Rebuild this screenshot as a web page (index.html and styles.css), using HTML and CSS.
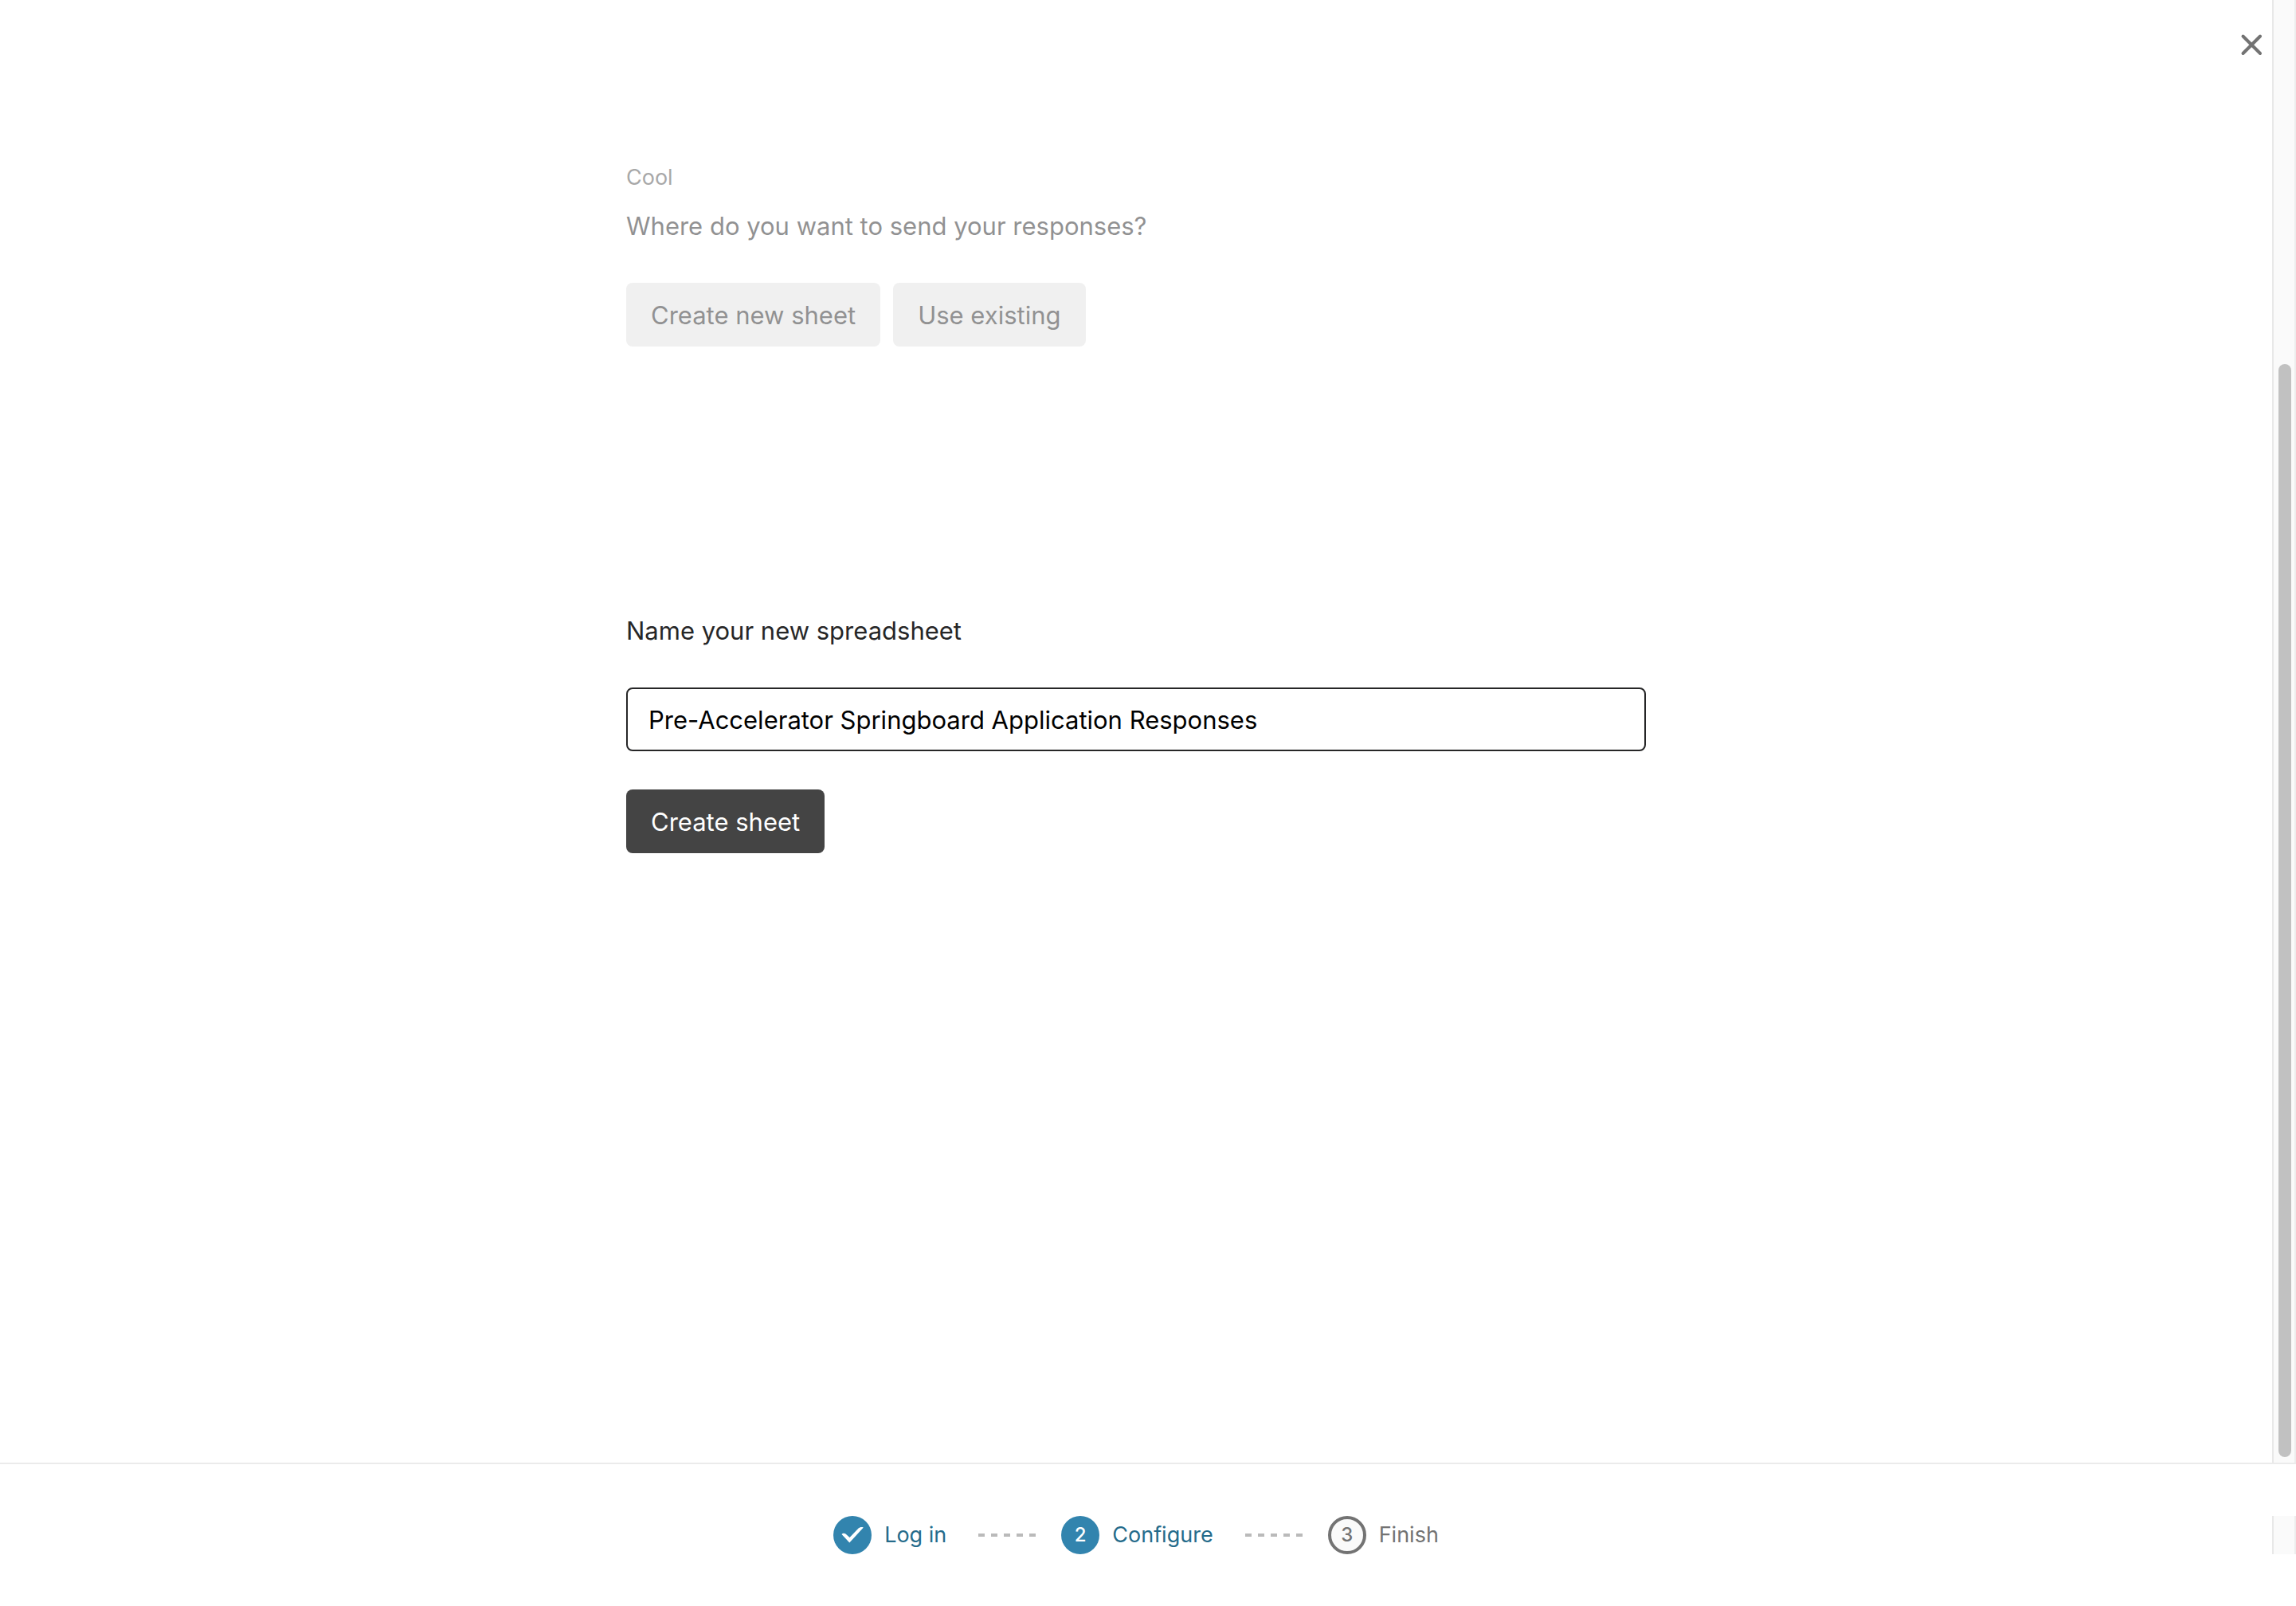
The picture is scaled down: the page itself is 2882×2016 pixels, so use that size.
FILE: index.html
```html
<!DOCTYPE html>
<html lang="en">
<head>
  <meta charset="UTF-8" />
  <meta name="viewport" content="width=device-width, initial-scale=1.0"/>
  <title>Google Sheets</title>
  <link rel="stylesheet" href="styles.css">
</head>
<body>
  <div class="modal">
    <div class="modal-body">
      <main class="content">
        <section class="step step-done">
          <p class="step-note">Cool</p>
          <p class="step-title">Where do you want to send your responses?</p>
          <div class="button-row">
            <button type="button" class="button button-light" disabled>Create new sheet</button>
            <button type="button" class="button button-light" disabled>Use existing</button>
          </div>
        </section>

        <form class="step" id="sheetForm">
          <label class="step-title" for="sheetName">Name your new spreadsheet</label>
          <input type="text" class="text-input" id="sheetName" value="Pre-Accelerator Springboard Application Responses" />
          <button type="button" class="button button-dark">Create sheet</button>
        </form>
      </main>

      <button type="button" class="close" aria-label="Close">
        <svg width="28" height="28" viewBox="0 0 28 28" fill="none" stroke="#737373" stroke-width="4" stroke-linecap="round">
          <path d="M3.5 3.5L25 25M25 3.5L3.5 25" />
        </svg>
      </button>

      <div class="scroll-track">
        <div class="scroll-space"></div>
        <div class="scroll-thumb"></div>
      </div>
    </div>

    <footer class="footer">
      <ol class="progress">
        <li class="progress-item done">
          <span class="circle">
            <svg width="48" height="48" viewBox="0 0 48 48" fill="#fff">
              <path d="M10.5 23C11.6 21.6 14 21.4 15.5 22.6L20.5 27L31.5 15.6C33 14 35.5 13.4 37.8 14.4L20.3 33.4Z" />
            </svg>
          </span>
          <span class="progress-label">Log in</span>
        </li>
        <li class="dashes" aria-hidden="true"></li>
        <li class="progress-item done">
          <span class="circle">2</span>
          <span class="progress-label">Configure</span>
        </li>
        <li class="dashes" aria-hidden="true"></li>
        <li class="progress-item">
          <span class="circle">3</span>
          <span class="progress-label">Finish</span>
        </li>
      </ol>
      <div class="scroll-track"></div>
    </footer>
  </div>
</body>
</html>
```
FILE: styles.css
```css
* {
  box-sizing: border-box;
}
body {
  margin: 0;
  background: #fff;
  color: #262627;
  font-family: Inter, sans-serif;
  font-size: 31px;
  line-height: 50px;
}
p {
  margin: 0;
}
.modal {
  display: flex;
  flex-direction: column;
  height: 100vh;
}
.modal-body {
  position: relative;
  display: flex;
  flex: 1;
  min-height: 0;
}
.content {
  flex: 1;
  padding-top: 203px;
}

/* steps */
.step {
  display: flex;
  flex-direction: column;
  align-items: flex-start;
  max-width: 1280px;
  margin: 0 auto 332px;
}
.step-done {
  opacity: 0.5;
}
.step-note {
  margin-bottom: 16px;
  color: #535353;
  font-size: 27px;
  line-height: 40px;
}
.step-title {
  margin-bottom: 46px;
}
.button-row {
  display: flex;
  gap: 16px;
}
.button {
  height: 80px;
  padding: 2px 31px 0;
  border: none;
  border-radius: 8px;
  font: inherit;
  cursor: pointer;
}
.button-light {
  background: #e2e2e2;
  color: #262627;
}
.button-dark {
  background: #444;
  color: #fff;
}
.text-input {
  width: 100%;
  height: 80px;
  margin-bottom: 48px;
  padding: 0 26px;
  border: 2px solid #262627;
  border-radius: 8px;
  background: #fff;
  color: #000;
  font: inherit;
}

.close {
  position: absolute;
  top: 34px;
  right: 34px;
  display: flex;
  padding: 8px;
  border: none;
  background: none;
  cursor: pointer;
}

/* scrollbar */
.scroll-track {
  display: flex;
  flex-direction: column;
  width: 30px;
  padding: 0 4px 7px 6px;
  border-left: 2px solid #e8e8e8;
  border-right: 2px solid #ededed;
  background: #fafafa;
}
.scroll-space {
  flex: 1;
}
.scroll-thumb {
  flex: 3;
  width: 16px;
  border-radius: 8px;
  background: #c1c1c1;
}

/* progress */
.footer {
  display: flex;
  height: 180px;
  padding: 65px 0;
  border-top: 2px solid #ebebeb;
}
.progress {
  display: flex;
  flex: 1;
  align-items: center;
  justify-content: center;
  height: 48px;
  margin: 0;
  padding: 0;
  list-style: none;
  font-size: 27px;
}
.footer .scroll-track {
  height: 48px;
}
.progress-item {
  display: flex;
  align-items: center;
  gap: 16px;
  color: #737373;
}
.circle {
  display: flex;
  align-items: center;
  justify-content: center;
  width: 48px;
  height: 48px;
  border: 4px solid #737373;
  border-radius: 50%;
  background: #fafafa;
  font-size: 24px;
  font-weight: 500;
}
.done {
  color: #256b8b;
}
.done .circle {
  border: none;
  background: #3284ae;
  color: #fff;
}
.dashes {
  width: 72px;
  height: 4px;
  margin: 0 32px 0 40px;
  background: repeating-linear-gradient(to right, #bababa 0 8px, transparent 8px 16px);
}
```
